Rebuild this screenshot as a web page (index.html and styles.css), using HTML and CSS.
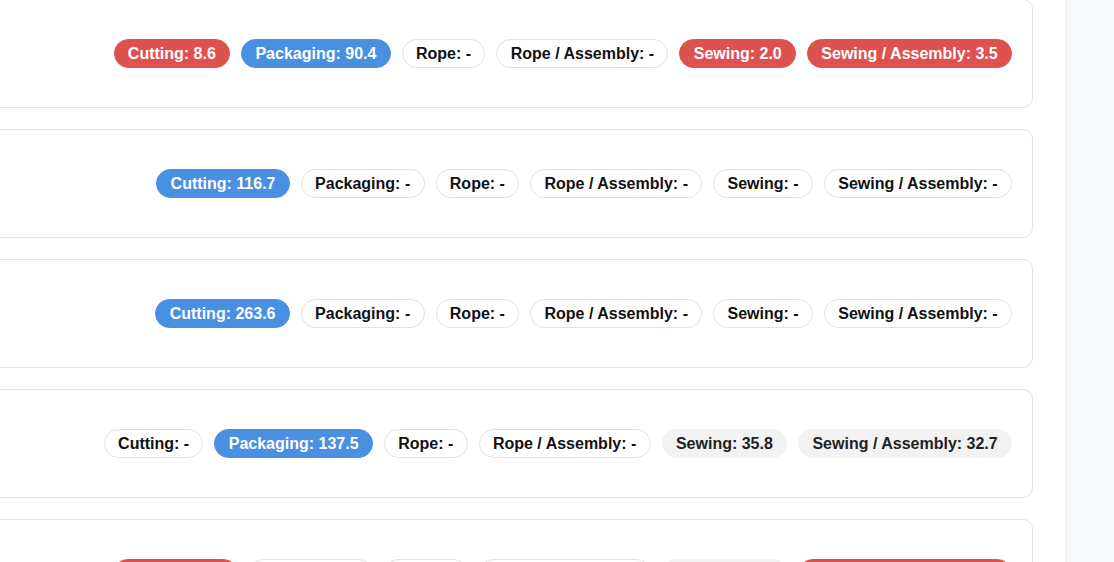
FILE: index.html
```html
<!DOCTYPE html>
<html>
<head>
<meta charset="utf-8">
<link rel="stylesheet" href="styles.css">
</head>
<body>
<div class="page">
  <main class="main">
    <div class="list">
      <div class="card">
        <span class="pill red">Cutting: 8.6</span>
        <span class="pill blue">Packaging: 90.4</span>
        <span class="pill">Rope: -</span>
        <span class="pill">Rope / Assembly: -</span>
        <span class="pill red">Sewing: 2.0</span>
        <span class="pill red">Sewing / Assembly: 3.5</span>
      </div>
      <div class="card">
        <span class="pill blue">Cutting: 116.7</span>
        <span class="pill">Packaging: -</span>
        <span class="pill">Rope: -</span>
        <span class="pill">Rope / Assembly: -</span>
        <span class="pill">Sewing: -</span>
        <span class="pill">Sewing / Assembly: -</span>
      </div>
      <div class="card">
        <span class="pill blue">Cutting: 263.6</span>
        <span class="pill">Packaging: -</span>
        <span class="pill">Rope: -</span>
        <span class="pill">Rope / Assembly: -</span>
        <span class="pill">Sewing: -</span>
        <span class="pill">Sewing / Assembly: -</span>
      </div>
      <div class="card">
        <span class="pill">Cutting: -</span>
        <span class="pill blue">Packaging: 137.5</span>
        <span class="pill">Rope: -</span>
        <span class="pill">Rope / Assembly: -</span>
        <span class="pill grey">Sewing: 35.8</span>
        <span class="pill grey">Sewing / Assembly: 32.7</span>
      </div>
      <div class="card">
        <span class="pill red">Cutting: 12.4</span>
        <span class="pill">Packaging: -</span>
        <span class="pill">Rope: -</span>
        <span class="pill">Rope / Assembly: -</span>
        <span class="pill grey">Sewing: 21.3</span>
        <span class="pill red">Sewing / Assembly: 18.9</span>
      </div>
    </div>
  </main>
  <aside class="sidebar"></aside>
</div>
</body>
</html>
```
FILE: styles.css
```css
html, body {
  margin: 0;
  padding: 0;
  background: #ffffff;
  overflow: hidden;
}
body {
  font-family: "Liberation Sans", Arial, sans-serif;
}
.page {
  display: flex;
  height: 562px;
}
.main {
  flex: 1;
  padding-right: 33px;
  overflow: hidden;
}
.list {
  display: flex;
  flex-direction: column;
  gap: 21px;
  margin-top: -1px;
  margin-left: -60px;
}
.card {
  height: 109px;
  box-sizing: border-box;
  border: 1px solid #e2e2e2;
  border-radius: 10px;
  background: #fff;
  padding: 0 20px;
  display: flex;
  align-items: center;
  justify-content: flex-end;
  gap: 11px;
  flex-shrink: 0;
}
.pill {
  display: inline-block;
  font-size: 16px;
  font-weight: bold;
  line-height: 19px;
  padding: 4px 13.3px;
  border: 1px solid #e0e0e0;
  border-radius: 15px;
  color: #111;
  background: #fff;
  white-space: nowrap;
}
.pill.red {
  background: #dd524f;
  border-color: #dd524f;
  color: #fff;
}
.pill.blue {
  background: #4a90e2;
  border-color: #4a90e2;
  color: #fff;
}
.pill.grey {
  background: #f2f2f2;
  border-color: #f2f2f2;
  color: #222;
}
.sidebar {
  width: 47px;
  flex-shrink: 0;
  background: #f8f9fa;
  border-left: 1px solid #ececec;
}
```
